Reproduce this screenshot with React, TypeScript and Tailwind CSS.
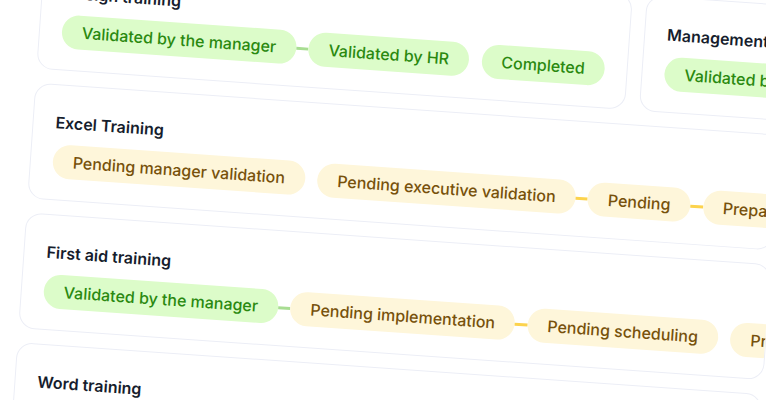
import React from 'react';

type Tone = 'green' | 'yellow';

interface Step {
    label: string;
    tone: Tone;
    link?: boolean;
}

interface Training {
    name: string;
    steps: Step[];
}

const toneStyles: Record<Tone, { pill: string; line: string }> = {
    green: { pill: 'bg-[#dcfcc9] text-[#2a8910]', line: 'bg-[#a8dd92]' },
    yellow: { pill: 'bg-[#fef6da] text-[#77510b]', line: 'bg-[#fcd34d]' },
};

const topRow: Training[] = [
    {
        name: 'Design training',
        steps: [
            { label: 'Validated by the manager', tone: 'green', link: true },
            { label: 'Validated by HR', tone: 'green' },
            { label: 'Completed', tone: 'green' },
        ],
    },
    {
        name: 'Management training',
        steps: [
            { label: 'Validated by the manager', tone: 'green', link: true },
            { label: 'Validated by HR', tone: 'green' },
        ],
    },
];

const trainings: Training[] = [
    {
        name: 'Excel Training',
        steps: [
            { label: 'Pending manager validation', tone: 'yellow' },
            { label: 'Pending executive validation', tone: 'yellow', link: true },
            { label: 'Pending', tone: 'yellow', link: true },
            { label: 'Preparation', tone: 'yellow' },
        ],
    },
    {
        name: 'First aid training',
        steps: [
            { label: 'Validated by the manager', tone: 'green', link: true },
            { label: 'Pending implementation', tone: 'yellow', link: true },
            { label: 'Pending scheduling', tone: 'yellow' },
            { label: 'Preparation', tone: 'yellow' },
        ],
    },
    {
        name: 'Word training',
        steps: [
            { label: 'Validated by the manager', tone: 'green', link: true },
            { label: 'Validated by HR', tone: 'green' },
            { label: 'Completed', tone: 'green' },
        ],
    },
];

const StepTrail: React.FC<{ steps: Step[] }> = ({ steps }) => (
    <div className="mt-[10px] flex items-center">
        {steps.map((step, i) => (
            <React.Fragment key={step.label + i}>
                <div
                    className={`h-[34px] px-5 flex-none flex items-center rounded-full text-base leading-6 font-medium whitespace-nowrap ${toneStyles[step.tone].pill}`}
                >
                    {step.label}
                </div>
                {i < steps.length - 1 && (
                    <div className="w-[12.5px] flex-none flex items-center">
                        {step.link && <div className={`h-[3px] w-full ${toneStyles[step.tone].line}`} />}
                    </div>
                )}
            </React.Fragment>
        ))}
    </div>
);

const TrainingCard: React.FC<{ training: Training; className?: string }> = ({ training, className = '' }) => (
    <div className={`flex-none overflow-hidden rounded-2xl border border-[#eceef6] bg-white px-[22px] pt-[25px] pb-[21px] ${className}`}>
        <h3 className="text-base leading-6 font-semibold text-[#161d2d]">{training.name}</h3>
        <StepTrail steps={training.steps} />
    </div>
);

export default function App() {
    return (
        <div className="relative w-[766px] h-[400px] overflow-hidden bg-white font-['Inter','Noto_Sans',sans-serif]">
            <div className="flex flex-col w-[900px] origin-top-left rotate-[4deg]">
                <div className="-mt-[50px] ml-[41px] flex flex-col gap-[14px]">
                    <div className="flex gap-[14px]">
                        <TrainingCard training={topRow[0]} />
                        <TrainingCard training={topRow[1]} className="w-[420px]" />
                    </div>
                    {trainings.map(t => (
                        <TrainingCard key={t.name} training={t} className="w-[747px]" />
                    ))}
                </div>
            </div>
        </div>
    );
}
